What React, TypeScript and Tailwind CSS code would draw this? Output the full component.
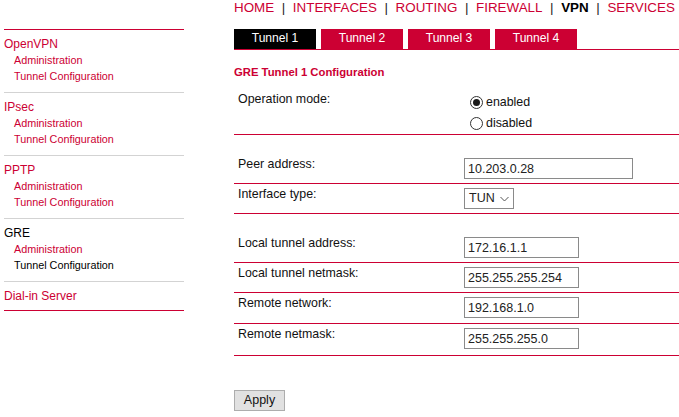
import { ReactNode } from "react";

const navItems = ["HOME", "INTERFACES", "ROUTING", "FIREWALL", "VPN", "SERVICES"];

interface SideSection {
  title: string
  links: string[]
  active?: boolean
}

const sections: SideSection[] = [
  { title: "OpenVPN", links: ["Administration", "Tunnel Configuration"] },
  { title: "IPsec", links: ["Administration", "Tunnel Configuration"] },
  { title: "PPTP", links: ["Administration", "Tunnel Configuration"] },
  { title: "GRE", links: ["Administration", "Tunnel Configuration"], active: true },
];

function Sidebar() {
  return (
    <div className="w-[180px] ml-[4px] mt-[29px] flex flex-col border-t border-[#cc0033]">
      {sections.map((s, i) => (
        <div key={s.title} className={i > 0 ? "border-t border-[#d3d3d3] pt-[6px] pb-[8px]" : "pt-[6px] pb-[8px]"}>
          <div className={s.active ? "text-[12px] leading-[16px] text-black" : "text-[12px] leading-[16px] text-[#cc0033]"}>
            {s.title}
          </div>
          {s.links.map((l, j) => (
            <div
              key={l}
              className={
                s.active && j === 1
                  ? "pl-[10px] text-[10.8px] leading-[16px] text-black"
                  : "pl-[10px] text-[10.8px] leading-[16px] text-[#cc0033]"
              }
            >
              {l}
            </div>
          ))}
        </div>
      ))}
      <div className="border-t border-b border-[#d3d3d3] border-b-[#cc0033] pt-[6px] pb-[6px]">
        <div className="text-[12px] leading-[16px] text-[#cc0033]">Dial-in Server</div>
      </div>
    </div>
  );
}

function Radio({ checked }: { checked?: boolean }) {
  return (
    <span className="ml-[6px] mr-[3px] size-[13px] rounded-full border border-[#333] bg-white flex items-center justify-center">
      {checked && <span className="size-[7px] rounded-full bg-[#1a1a1a]" />}
    </span>
  );
}

function Row({ label, children, h }: { label: string; children: ReactNode; h: string }) {
  return (
    <div className={`flex border-b border-[#cc0033] ${h}`}>
      <div className="w-[230px] pl-[4px] pt-[3px] leading-[15px]">{label}</div>
      <div className="pt-[4px]">{children}</div>
    </div>
  );
}

function Field({ value, w }: { value: string; w: string }) {
  return (
    <input
      readOnly
      value={value}
      className={`${w} h-[21px] border border-[#8a8a8a] bg-white pl-[3px] text-[12.5px] text-[#222] outline-none`}
    />
  );
}

export default function App() {
  return (
    <div className="flex min-h-[417px] bg-white text-[12.4px] text-[#111] font-['Liberation_Sans',Arial,sans-serif]">
      <Sidebar />
      <div className="ml-[50px] flex-1 flex flex-col">
        <div className="flex gap-[7.6px] text-[13.4px] leading-[15px]">
          {navItems.map((n, i) => (
            <div key={n} className="flex gap-[7.6px]">
              <span className={n === "VPN" ? "font-bold text-black" : "text-[#cc0033]"}>{n}</span>
              {i < navItems.length - 1 && <span className="text-[#222]">|</span>}
            </div>
          ))}
        </div>

        <div className="mt-[14px] flex gap-[5px] border-b border-[#cc0033]">
          {["Tunnel 1", "Tunnel 2", "Tunnel 3", "Tunnel 4"].map((t, i) => (
            <div
              key={t}
              className={
                i === 0
                  ? "w-[82px] h-[20px] bg-black text-white text-[12.1px] leading-[16px] pt-[1px] text-center"
                  : "w-[82px] h-[20px] bg-[#cc0033] text-white text-[12.1px] leading-[16px] pt-[1px] text-center"
              }
            >
              {t}
            </div>
          ))}
        </div>

        <div className="mt-[15px] text-[11.3px] leading-[14px] font-bold text-[#cc0033]">GRE Tunnel 1 Configuration</div>

        <div className="mt-[10px] flex flex-col">
          <div className="flex border-b border-[#cc0033] h-[46px]">
            <div className="w-[230px] pl-[4px] pt-[3px] leading-[15px]">Operation mode:</div>
            <div className="pt-[3px] flex flex-col">
              <label className="flex items-center h-[21px] leading-[21px]">
                <Radio checked />
                enabled
              </label>
              <label className="flex items-center h-[21px] leading-[21px]">
                <Radio />
                disabled
              </label>
            </div>
          </div>

          <div className="h-[19px]" />
          <Row label="Peer address:" h="h-[30px]">
            <Field value="10.203.0.28" w="w-[169px]" />
          </Row>
          <Row label="Interface type:" h="h-[30px]">
            <div className="w-[50px] h-[21px] border border-[#8a8a8a] bg-white flex items-center justify-between pl-[4px] pr-[4px] text-[12.5px] text-[#222]">
              <span>TUN</span>
              <svg width="9" height="6" viewBox="0 0 9 6" fill="none">
                <path d="M0.5 1 L4.5 5 L8.5 1" stroke="#555" strokeWidth="1" />
              </svg>
            </div>
          </Row>

          <div className="h-[19px]" />
          <Row label="Local tunnel address:" h="h-[30px]">
            <Field value="172.16.1.1" w="w-[115px]" />
          </Row>
          <Row label="Local tunnel netmask:" h="h-[30px]">
            <Field value="255.255.255.254" w="w-[115px]" />
          </Row>
          <Row label="Remote network:" h="h-[31px]">
            <Field value="192.168.1.0" w="w-[115px]" />
          </Row>
          <Row label="Remote netmask:" h="h-[32px]">
            <Field value="255.255.255.0" w="w-[115px]" />
          </Row>
        </div>

        <div className="mt-[34px]">
          <button className="w-[51px] h-[21px] border border-[#adadad] bg-[#e1e1e1] text-[12.5px] text-[#111]">
            Apply
          </button>
        </div>
      </div>
    </div>
  );
}
